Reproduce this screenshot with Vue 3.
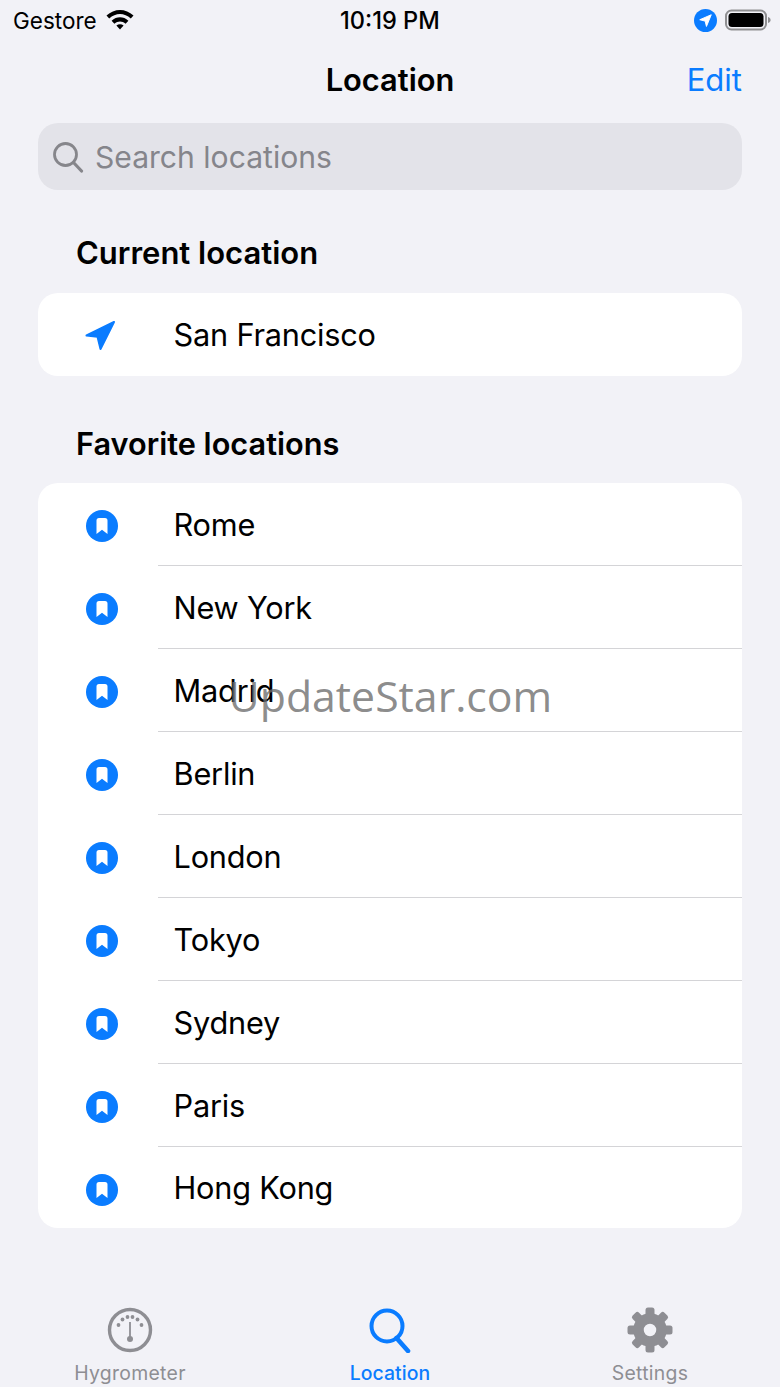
<script setup>
const favorites = ['Rome', 'New York', 'Madrid', 'Berlin', 'London', 'Tokyo', 'Sydney', 'Paris', 'Hong Kong']
const dots = [[-11.5, -3], [-7.5, -8.5], [-2.5, -11], [2.5, -11], [7.5, -8.5], [11.5, -3]]
const gearTeeth = [0, 45, 90, 135, 180, 225, 270, 315]
</script>

<template>
  <div class="page">
    <header class="status">
      <div class="status-left">
        <span>Gestore</span>
        <svg class="wifi" viewBox="0 0 28 22" width="28" height="22">
          <path d="M0.5 7.6C8.3 0 19.7 0 27.5 7.6L24.8 10.6C18.4 4.6 9.6 4.6 3.2 10.6Z" />
          <path d="M5.6 12.8C10.6 8.2 17.4 8.2 22.4 12.8L19.6 15.8C16.2 12.8 11.8 12.8 8.4 15.8Z" />
          <path d="M10.4 17.6C12.6 15.8 15.4 15.8 17.6 17.6L14 21.6Z" />
        </svg>
      </div>
      <span class="clock">10:19 PM</span>
      <div class="status-right">
        <svg viewBox="0 0 24 24" width="23" height="23">
          <circle cx="12" cy="12" r="12" fill="#0a7cff" />
          <path d="M18 6L6 11.2L11.6 12.6L13 18.2Z" fill="#fff" stroke="#fff" stroke-width="1" stroke-linejoin="round" />
        </svg>
        <svg viewBox="0 0 46 22" width="46" height="22">
          <rect x="1" y="1.5" width="40" height="19" rx="5.5" fill="none" stroke="#8f8f91" stroke-width="2" />
          <rect x="3.5" y="4" width="35" height="14" rx="3.5" fill="#000" />
          <path d="M43 8C44.8 8.6 45.6 9.6 45.6 11C45.6 12.4 44.8 13.4 43 14Z" fill="#8f8f91" />
        </svg>
      </div>
    </header>

    <nav class="nav">
      <h1>Location</h1>
      <a class="edit">Edit</a>
    </nav>

    <main class="content">
      <div class="search">
        <svg viewBox="0 0 32 32" width="32" height="32" fill="none" stroke="#86868b" stroke-width="2.8" stroke-linecap="round">
          <circle cx="13.5" cy="13.5" r="11" />
          <path d="M21.5 21.5L29.5 30" stroke-width="3.2" />
        </svg>
        <span>Search locations</span>
      </div>

      <h2 class="first">Current location</h2>
      <section class="card">
        <div class="row">
          <div class="row-icon">
            <svg class="arrow" viewBox="0 0 32 32" width="32" height="32">
              <path d="M30 2L2.5 15.5L13.5 16.8L16.5 29Z" fill="#0a7cff" stroke="#0a7cff" stroke-width="2" stroke-linejoin="round" />
            </svg>
          </div>
          <div class="row-label plain">San Francisco</div>
        </div>
      </section>

      <h2 class="second">Favorite locations</h2>
      <section class="card favorites">
        <div v-for="city in favorites" :key="city" class="row">
          <div class="row-icon">
            <svg class="mark" viewBox="0 0 32 32" width="32" height="32">
              <circle cx="16" cy="16" r="16" fill="#0a7cff" />
              <path d="M10.5 10.5Q10.5 8 13 8H19Q21.5 8 21.5 10.5V24L16 19.8L10.5 24Z" fill="#fff" />
            </svg>
          </div>
          <div class="row-label">{{ city }}</div>
        </div>
      </section>
    </main>

    <footer class="tabs">
      <div class="tab">
        <svg viewBox="0 0 46 46" width="46" height="46">
          <circle cx="23" cy="23" r="20.5" fill="none" stroke="#8e8e93" stroke-width="3.4" />
          <circle v-for="(d, i) in dots" :key="i" :cx="23 + d[0]" :cy="21 + d[1]" r="1.9" fill="#8e8e93" />
          <path d="M23 15V31" stroke="#8e8e93" stroke-width="1.8" />
          <circle cx="23" cy="32" r="3" fill="#8e8e93" />
        </svg>
        <span>Hygrometer</span>
      </div>
      <div class="tab active">
        <svg viewBox="0 0 46 46" width="46" height="46" fill="none" stroke="#0a7cff" stroke-linecap="round">
          <circle cx="20" cy="19" r="15.5" stroke-width="4" />
          <path d="M29.5 31L41 44" stroke-width="4.6" />
        </svg>
        <span>Location</span>
      </div>
      <div class="tab">
        <svg viewBox="0 0 46 46" width="46" height="46">
          <g fill="#8e8e93">
            <rect v-for="a in gearTeeth" :key="a" x="18.5" y="0.5" width="9" height="12" rx="2.5" :transform="`rotate(${a} 23 23)`" />
          </g>
          <circle cx="23" cy="23" r="11.5" fill="none" stroke="#8e8e93" stroke-width="10.5" />
        </svg>
        <span>Settings</span>
      </div>
    </footer>

    <div class="watermark">UpdateStar.com</div>
  </div>
</template>

<style>
html, body { margin: 0; background: #f2f2f7; }
</style>

<style scoped>
.page {
  position: relative;
  width: 780px;
  height: 1387px;
  overflow: hidden;
  display: flex;
  flex-direction: column;
  background: #f2f2f7;
  color: #000;
  font-family: Inter, "Liberation Sans", sans-serif;
}
.status {
  height: 40px;
  padding: 0 9px 0 13px;
  display: grid;
  grid-template-columns: 368px auto 1fr;
  align-items: center;
  font-size: 22.5px;
  font-weight: 400;
}
.status-left { display: flex; align-items: center; gap: 9px; }
.wifi { fill: #000; margin-top: -3px; }
.clock { width: 100px; margin-left: -41px; font-weight: 500; font-size: 23.6px; white-space: nowrap; }
.status-right { display: flex; justify-content: flex-end; align-items: center; gap: 8px; }
.nav {
  position: relative;
  height: 78px;
  padding-bottom: 2px;
  display: flex;
  align-items: center;
  justify-content: center;
}
.nav h1 { margin: 0; font-size: 30.8px; font-weight: 600; }
.edit {
  position: absolute;
  right: 38px;
  color: #0a7cff;
  font-size: 31px;
}
.content { flex: 1; padding: 3px 38px 0; }
.search {
  height: 67px;
  border-radius: 20px;
  background: #e3e3e9;
  display: flex;
  align-items: center;
  gap: 11px;
  padding-left: 14px;
  color: #85858b;
  font-size: 30.1px;
}
h2 {
  margin: 0;
  box-sizing: border-box;
  padding-left: 38px;
  line-height: 36px;
  font-weight: 600;
  white-space: nowrap;
}
h2.first { height: 103px; padding-top: 45px; font-size: 31px; }
h2.second { height: 107px; padding-top: 50px; font-size: 30.7px; }
.card {
  background: #fff;
  border-radius: 20px;
  overflow: hidden;
}
.row {
  height: 83px;
  display: flex;
  box-sizing: border-box;
}
.favorites .row:last-child { height: 81px; }
.row-icon {
  width: 120px;
  flex: none;
  padding-left: 48px;
  box-sizing: border-box;
  display: flex;
  align-items: center;
}
.arrow { margin: 2px 0 0 -2px; }
.mark { margin-top: 2px; }
.favorites .row:last-child .mark { margin-top: 4px; }
.row-label {
  flex: 1;
  display: flex;
  align-items: center;
  padding-left: 15.5px;
  font-size: 30.7px;
  letter-spacing: -0.2px;
  border-bottom: 1px solid #d4d4d7;
}
.row-label.plain, .row:last-child .row-label { border-bottom: none; }
.tabs {
  height: 107px;
  display: grid;
  grid-template-columns: repeat(3, 1fr);
}
.tab {
  display: flex;
  flex-direction: column;
  align-items: center;
  gap: 8px;
  padding-top: 27px;
  color: #8e8e93;
  font-size: 19.4px;
  font-weight: 400;
  letter-spacing: 0.3px;
}
.tab.active { color: #0a7cff; font-weight: 500; letter-spacing: 0.1px; }
.watermark {
  position: absolute;
  left: 228.5px;
  top: 668px;
  color: rgba(110, 110, 110, 0.8);
  font-family: "Open Sans", sans-serif;
  font-size: 42.8px;
  line-height: 56px;
  pointer-events: none;
  white-space: nowrap;
}
</style>
